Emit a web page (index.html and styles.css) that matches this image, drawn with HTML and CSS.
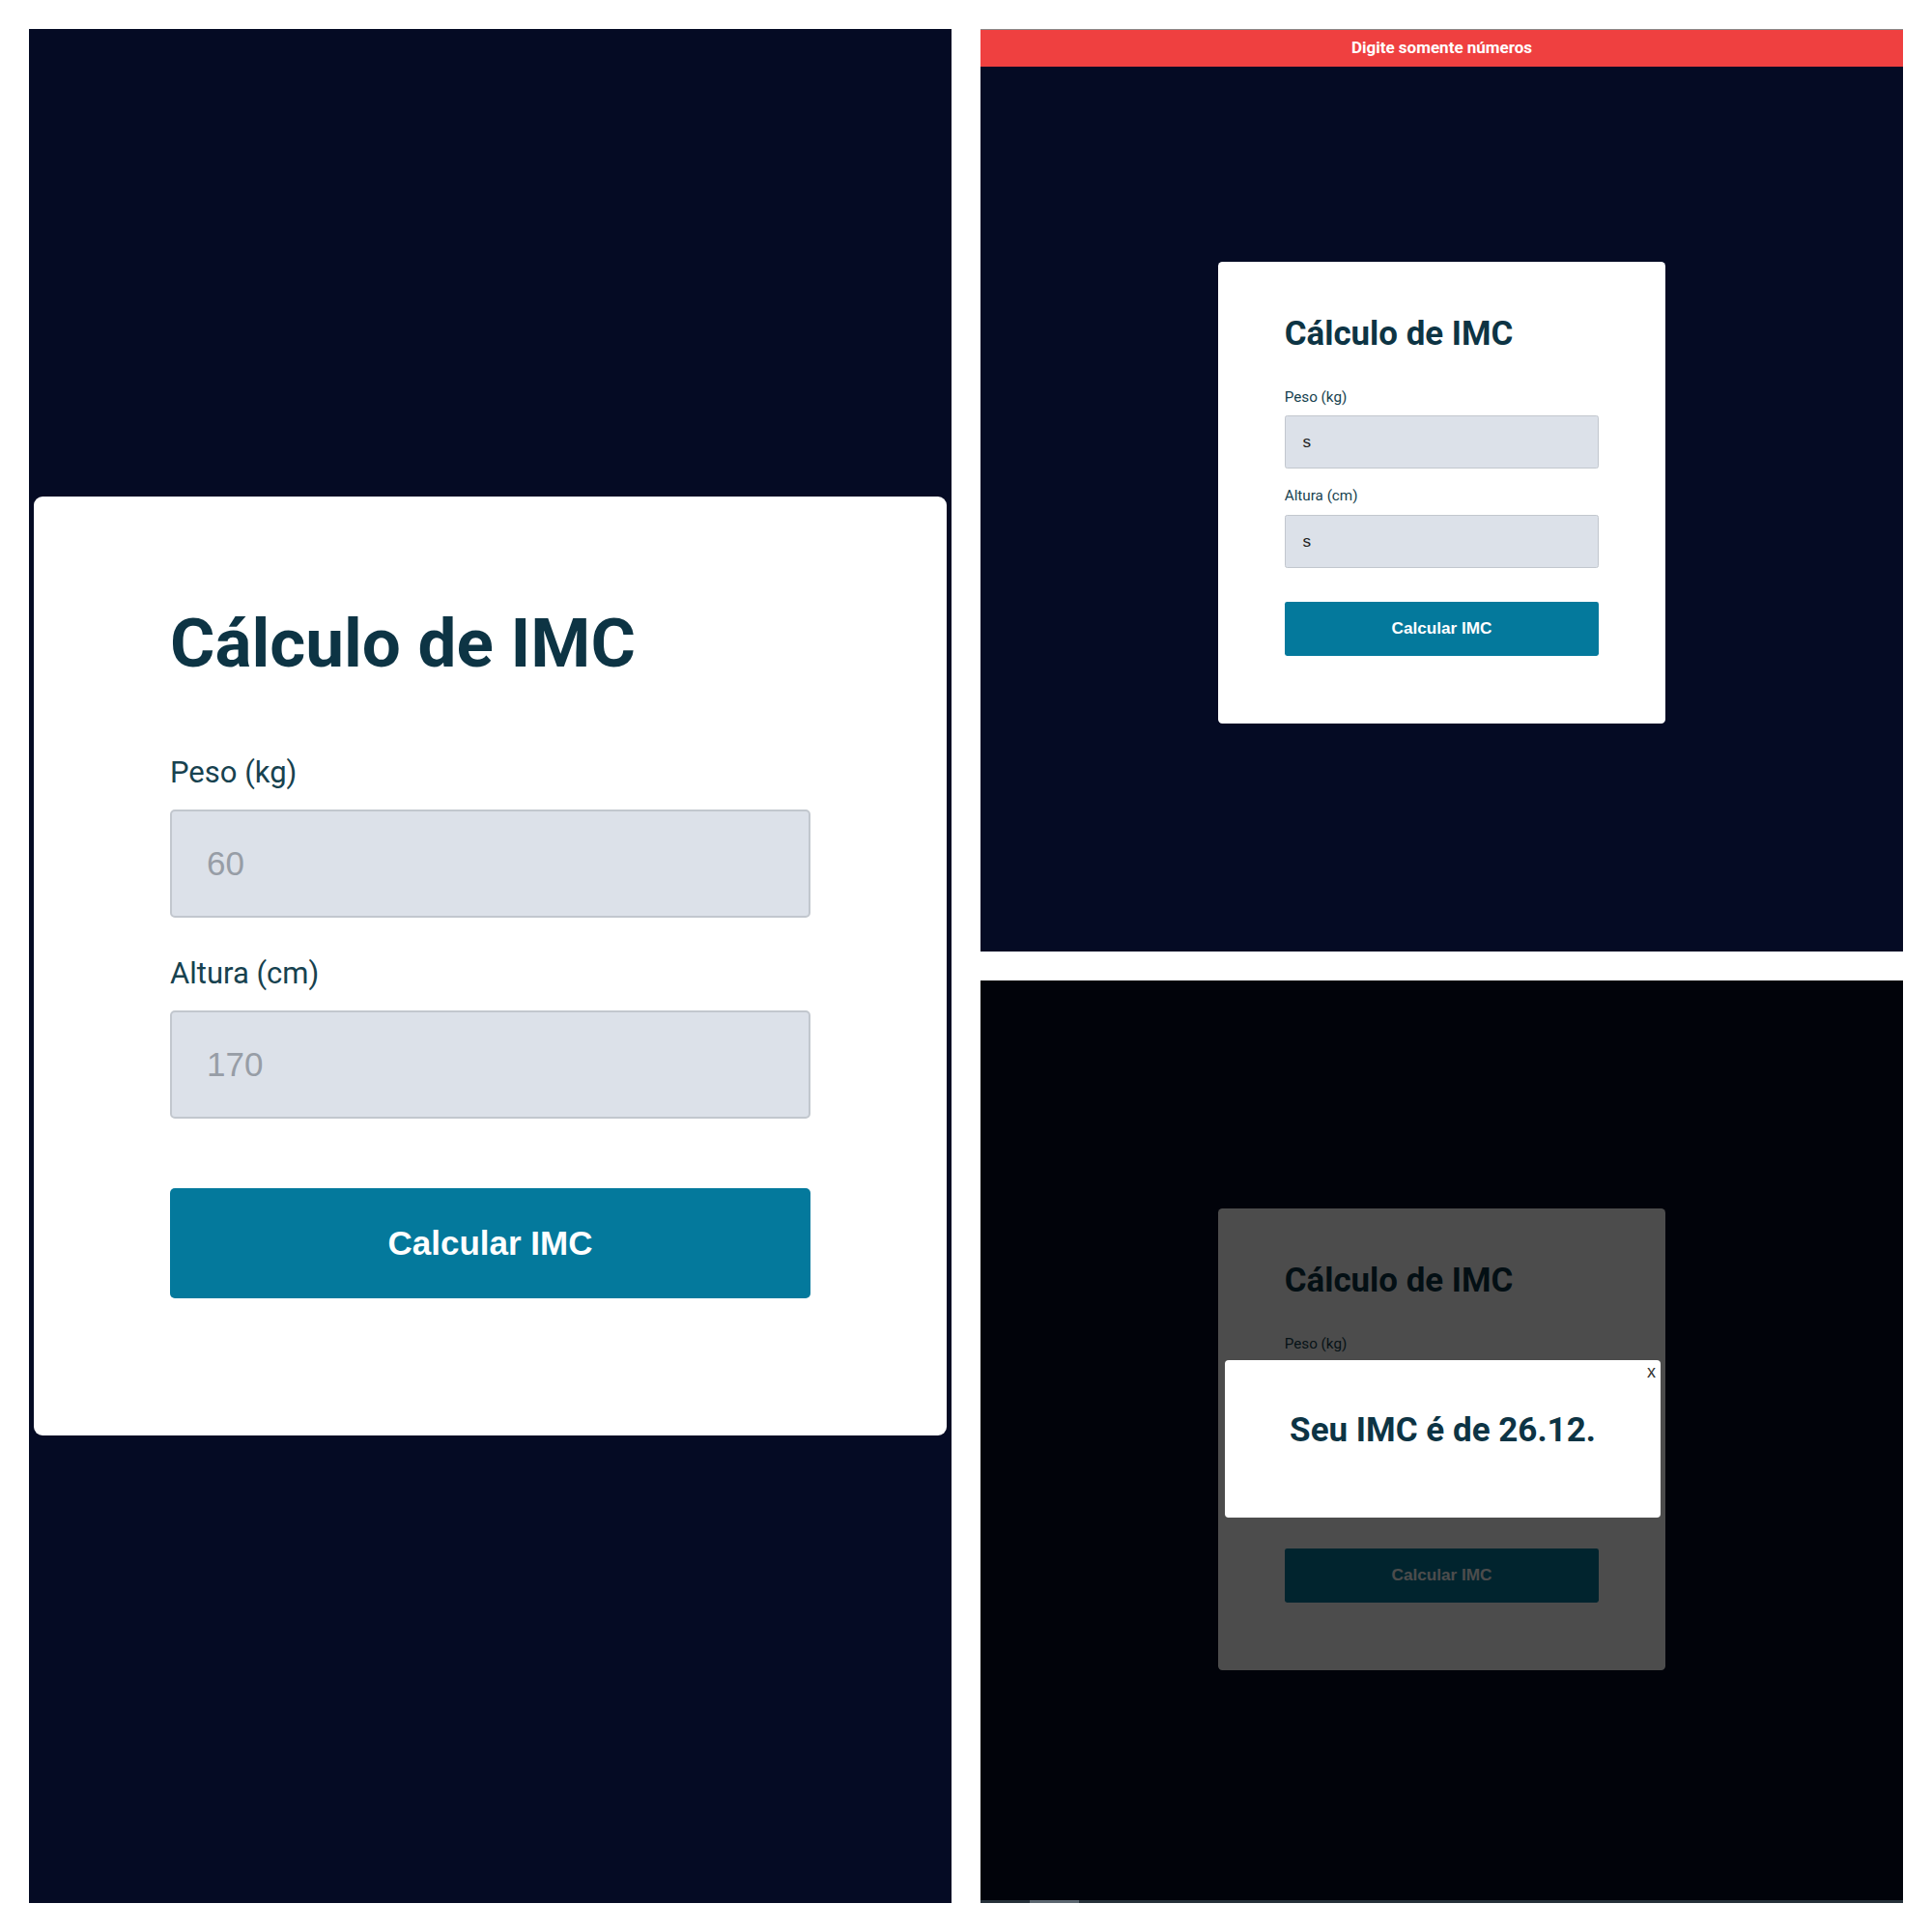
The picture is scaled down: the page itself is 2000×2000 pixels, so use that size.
FILE: index.html
```html
<!DOCTYPE html>
<html lang="pt-BR">
<head>
<meta charset="utf-8">
<title>Cálculo de IMC</title>
<link rel="stylesheet" href="styles.css">
</head>
<body>
<main class="collage">
  <section class="shot shot-tall">
    <form class="card">
      <h1 class="card-title">Cálculo de IMC</h1>
      <label class="field-label" for="peso-a">Peso (kg)</label>
      <input class="field-input" id="peso-a" type="text" placeholder="60">
      <label class="field-label" for="altura-a">Altura (cm)</label>
      <input class="field-input field-last" id="altura-a" type="text" placeholder="170">
      <button class="calc-btn" type="button">Calcular IMC</button>
    </form>
  </section>

  <section class="shot shot-toast">
    <div class="toast">Digite somente números</div>
    <form class="card">
      <h1 class="card-title">Cálculo de IMC</h1>
      <label class="field-label" for="peso-b">Peso (kg)</label>
      <input class="field-input" id="peso-b" type="text" value="s">
      <label class="field-label" for="altura-b">Altura (cm)</label>
      <input class="field-input field-last" id="altura-b" type="text" value="s">
      <button class="calc-btn" type="button">Calcular IMC</button>
    </form>
  </section>

  <section class="shot shot-modal">
    <form class="card">
      <h1 class="card-title">Cálculo de IMC</h1>
      <label class="field-label" for="peso-c">Peso (kg)</label>
      <input class="field-input" id="peso-c" type="text">
      <span class="field-label">&nbsp;</span>
      <input class="field-input field-last" id="altura-c" type="text">
      <button class="calc-btn" type="button">Calcular IMC</button>
    </form>
    <div class="overlay">
      <div class="modal">
        <span class="modal-close">x</span>
        <p class="modal-text">Seu IMC é de 26.12.</p>
      </div>
    </div>
    <div class="scrollbar"><div class="scrollbar-thumb"></div></div>
  </section>
</main>
</body>
</html>
```

FILE: styles.css
```css
* {
  box-sizing: border-box;
}

html,
body {
  margin: 0;
  background: #ffffff;
}

body {
  font-family: Roboto, "Noto Sans", sans-serif;
}

.collage {
  display: grid;
  grid-template-columns: 955px 955px;
  grid-template-rows: 955px 955px;
  gap: 30px;
  padding: 30px;
}

.shot {
  --u: 0.491px;
  position: relative;
  overflow: hidden;
  background: #050b24;
  display: flex;
  align-items: center;
  justify-content: center;
}

.shot-tall {
  --u: 1px;
  grid-row: 1 / span 2;
}

.card {
  width: calc(945 * var(--u));
  margin: 0;
  background: #ffffff;
  border-radius: calc(9 * var(--u));
  padding: calc(107 * var(--u)) calc(141 * var(--u)) calc(142 * var(--u));
  display: flex;
  flex-direction: column;
}

.shot-toast .card {
  margin-top: 5px;
}

.shot-modal .card {
  margin-bottom: 5px;
}

.card-title {
  margin: 0 0 calc(71 * var(--u));
  font-size: calc(71 * var(--u));
  line-height: calc(90 * var(--u));
  font-weight: 700;
  color: #0d3444;
}

.field-label {
  font-size: calc(31 * var(--u));
  line-height: calc(36 * var(--u));
  color: #17424f;
  margin-bottom: calc(20 * var(--u));
}

.field-input {
  height: calc(112 * var(--u));
  margin: 0 0 calc(40 * var(--u));
  padding: 0 calc(36 * var(--u));
  border: calc(2 * var(--u)) solid #c2c7ce;
  border-radius: calc(5 * var(--u));
  background: #dce1e9;
  font-family: "Liberation Sans", Arial, sans-serif;
  font-size: calc(35 * var(--u));
  color: #222222;
  outline: none;
}

.field-input::placeholder {
  color: #979da6;
}

.field-last {
  margin-bottom: calc(72 * var(--u));
}

.calc-btn {
  height: calc(114 * var(--u));
  border: none;
  border-radius: calc(5 * var(--u));
  background: #04799c;
  color: #ffffff;
  font-family: "Liberation Sans", Arial, sans-serif;
  font-weight: 700;
  font-size: calc(35 * var(--u));
  cursor: pointer;
}

.toast {
  position: absolute;
  top: 0;
  left: 0;
  right: 0;
  height: 39px;
  background: #ef4040;
  border-top: 1px solid #8a8a8a;
  color: #ffffff;
  font-weight: 700;
  font-size: 17px;
  line-height: 37px;
  text-align: center;
}

.overlay {
  position: absolute;
  inset: 0;
  background: rgba(0, 0, 0, 0.7);
  display: flex;
  align-items: center;
  justify-content: center;
}

.modal {
  position: relative;
  width: 451px;
  height: 163px;
  margin-top: -6px;
  margin-left: 2px;
  background: #ffffff;
  border-radius: 4px;
  padding-top: 53px;
}

.modal-close {
  position: absolute;
  top: 2px;
  right: 5px;
  font-family: "Liberation Sans", Arial, sans-serif;
  font-size: 18px;
  color: #333333;
}

.modal-text {
  margin: 0;
  text-align: center;
  font-weight: 700;
  font-size: 35px;
  line-height: 40px;
  color: #0d3444;
}

.scrollbar {
  position: absolute;
  left: 0;
  right: 0;
  bottom: 0;
  height: 3px;
  background: #26313a;
}

.scrollbar-thumb {
  width: 51px;
  height: 100%;
  margin-left: 51px;
  background: #5b6670;
}
```
